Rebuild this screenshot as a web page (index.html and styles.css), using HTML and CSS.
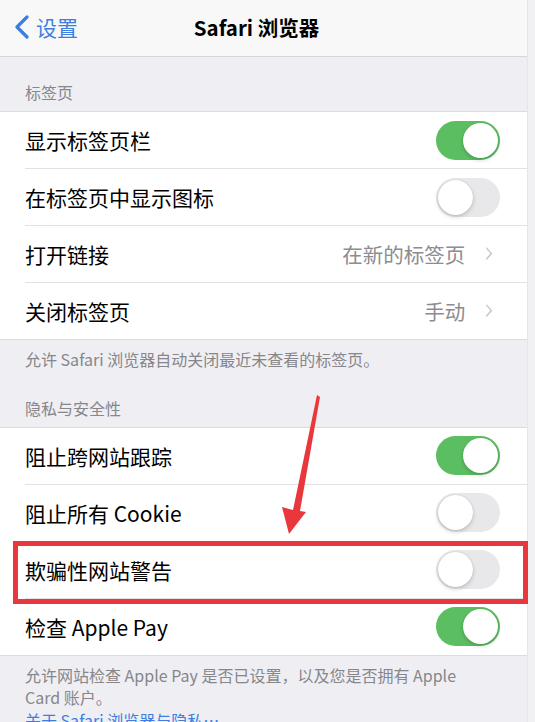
FILE: index.html
```html
<!DOCTYPE html>
<html lang="zh-CN">
<head>
<meta charset="utf-8">
<title>Safari 浏览器</title>
<link rel="stylesheet" href="styles.css">
</head>
<body>
<div class="screen">
  <header class="nav">
    <div class="back">
      <svg class="back-icon" width="16" height="24" viewBox="0 0 16 24"><path d="M13 2 L3 12 L13 22" fill="none" stroke="#3d7ee0" stroke-width="3.2" stroke-linecap="round" stroke-linejoin="round"/></svg>
      <span>设置</span>
    </div>
    <div class="title">Safari 浏览器</div>
  </header>

  <div class="group-header">标签页</div>
  <div class="list">
    <div class="row"><span class="label">显示标签页栏</span><span class="toggle on"><span class="knob"></span></span></div>
    <div class="row"><span class="label">在标签页中显示图标</span><span class="toggle"><span class="knob"></span></span></div>
    <div class="row"><span class="label">打开链接</span><span class="value">在新的标签页</span><span class="chev">›</span></div>
    <div class="row last"><span class="label">关闭标签页</span><span class="value">手动</span><span class="chev">›</span></div>
  </div>
  <div class="group-footer">允许 Safari 浏览器自动关闭最近未查看的标签页。</div>

  <div class="group-header second">隐私与安全性</div>
  <div class="list">
    <div class="row"><span class="label">阻止跨网站跟踪</span><span class="toggle on"><span class="knob"></span></span></div>
    <div class="row"><span class="label">阻止所有 Cookie</span><span class="toggle"><span class="knob"></span></span></div>
    <div class="row"><span class="label">欺骗性网站警告</span><span class="toggle"><span class="knob"></span></span></div>
    <div class="row last"><span class="label">检查 Apple Pay</span><span class="toggle on"><span class="knob"></span></span></div>
  </div>
  <div class="group-footer narrow">允许网站检查 Apple Pay 是否已设置，以及您是否拥有 Apple Card 账户。<br><span class="link">关于 Safari 浏览器与隐私…</span></div>
</div>

<div class="highlight"></div>
<svg class="arrow" width="535" height="722" viewBox="0 0 535 722">
  <polygon points="317,395 320,397 300,511 306,512 289,534 282,507 293,510" fill="#e8383d"/>
</svg>
</body>
</html>
```

FILE: styles.css
```css
html, body {
  margin: 0;
  padding: 0;
}
body {
  background: #f1f1f4;
  font-family: "Noto Sans CJK SC", "Noto Sans", sans-serif;
  width: 535px;
  height: 722px;
  overflow: hidden;
  position: relative;
}
.screen {
  width: 527px;
  background: #efeff3;
  border-right: 1px solid #e6e6e8;
  min-height: 722px;
}
.nav {
  height: 56px;
  background: #f8f8f8;
  border-bottom: 1px solid #d6d6d8;
  display: flex;
  align-items: center;
  position: relative;
}
.back {
  display: flex;
  align-items: center;
  padding-left: 14px;
  color: #3d7ee0;
  font-size: 21px;
  gap: 6px;
  margin-top: -2px;
}
.back-icon {
  display: block;
}
.title {
  flex: 1;
  text-align: center;
  margin-left: -92px;
  font-size: 20.5px;
  font-weight: 700;
  color: #000;
  margin-top: -2px;
}
.group-header {
  padding: 24px 25px 8px;
  line-height: 22px;
  font-size: 16px;
  color: #86868b;
}
.group-header.second {
  padding-top: 26px;
}
.list {
  background: #fff;
  border-top: 1px solid #dcdcdf;
  border-bottom: 1px solid #dcdcdf;
}
.row {
  height: 57px;
  margin-left: 25px;
  padding-right: 27px;
  display: flex;
  align-items: center;
  border-bottom: 1px solid #e2e2e5;
  box-sizing: border-box;
}
.row.last {
  border-bottom: none;
  height: 56px;
}
.label {
  flex: 1;
  font-size: 21px;
  color: #000;
}
.value {
  font-size: 20.5px;
  color: #8c8c91;
}
.chev {
  font-size: 32px;
  line-height: 1;
  color: #c4c4c7;
  margin-left: 18px;
  margin-right: 4px;
  margin-top: -4px;
  font-family: "DejaVu Sans", sans-serif;
  font-weight: 300;
  transform: scaleX(0.8);
}
.toggle {
  width: 64px;
  height: 39px;
  border-radius: 20px;
  background: #e8e8ea;
  position: relative;
  box-sizing: border-box;
  display: block;
}
.toggle.on {
  background: #5bbf61;
}
.knob {
  position: absolute;
  top: 2px;
  left: 2px;
  width: 35px;
  height: 35px;
  border-radius: 50%;
  background: #fff;
  box-shadow: 0 2px 4px rgba(0,0,0,0.18), 0 0 1px rgba(0,0,0,0.2);
}
.toggle.on .knob {
  left: 27px;
}
.group-footer {
  padding: 8px 30px 0 25px;
  font-size: 16px;
  line-height: 22.5px;
  color: #86868b;
}
.group-footer.narrow {
  padding-right: 60px;
}
.link {
  color: #3d7ee0;
}
.highlight {
  position: absolute;
  left: 13px;
  top: 541px;
  width: 515px;
  height: 63px;
  border: 5px solid #e8383d;
  box-sizing: border-box;
}
.arrow {
  position: absolute;
  left: 0;
  top: 0;
  pointer-events: none;
}
```
